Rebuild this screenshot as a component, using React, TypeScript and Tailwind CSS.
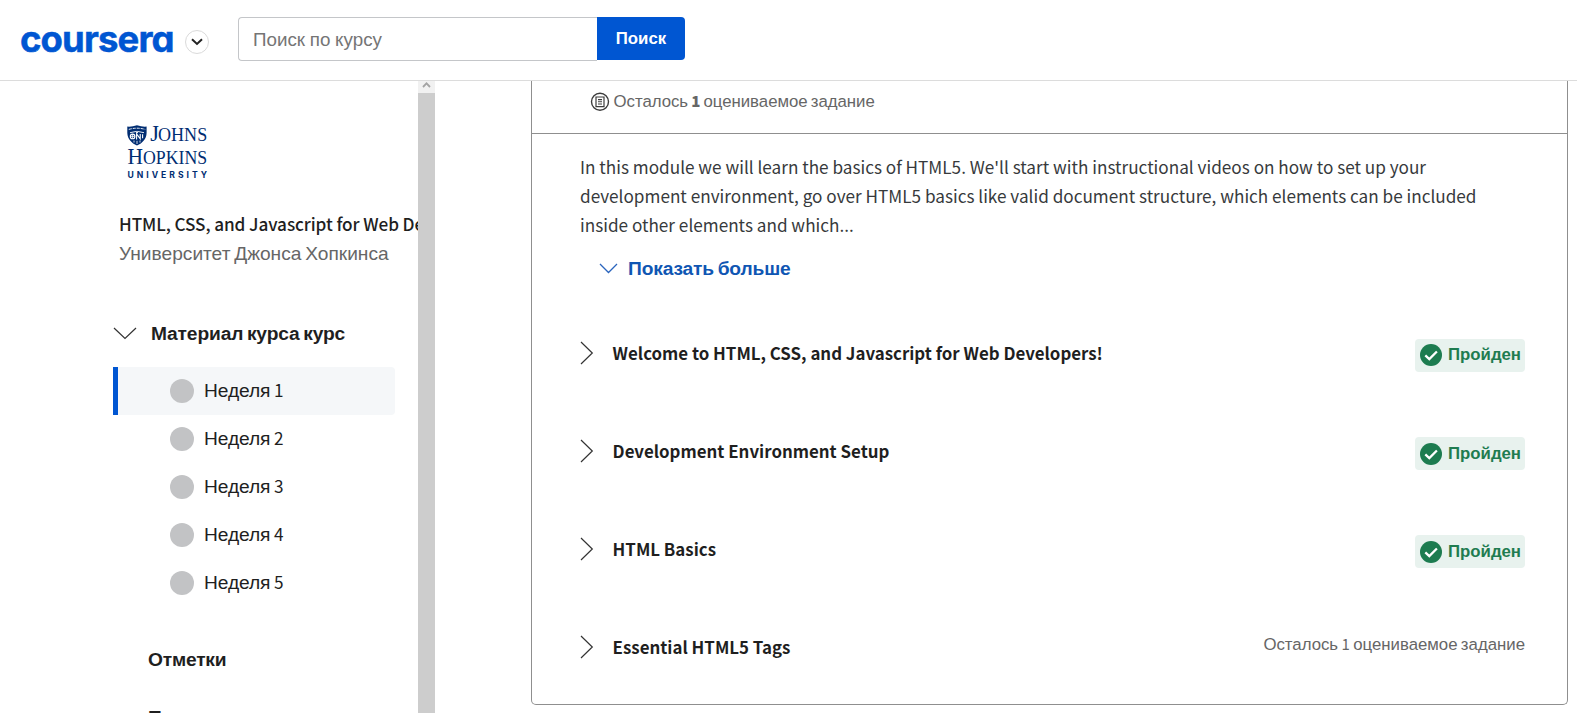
import type { ReactNode } from "react";

const weeks = [1, 2, 3, 4, 5];

const lessons = [
  { title: "Welcome to HTML, CSS, and Javascript for Web Developers!", done: true },
  { title: "Development Environment Setup", done: true },
  { title: "HTML Basics", done: true },
  { title: "Essential HTML5 Tags", done: false },
];

function Latin({ children, className = "" }: { children: ReactNode; className?: string }) {
  return (
    <span className={`font-['Noto_Sans_CJK_SC',sans-serif] text-[0.895em] leading-none ${className}`}>{children}</span>
  );
}

function CourseraLogo() {
  return (
    <svg className="h-[44px] w-[165px] overflow-visible" viewBox="0 0 165 44" role="img" aria-label="coursera">
      <text
        x="0"
        y="32"
        textLength="154.5"
        lengthAdjust="spacing"
        fill="#0056d2"
        stroke="#0056d2"
        strokeWidth="0.5"
        className="font-['Inter',sans-serif] text-[36.5px] font-bold [font-feature-settings:'cv11']"
      >
        coursera
      </text>
    </svg>
  );
}

function UniversityLogo() {
  return (
    <svg className="block h-[56px] w-[84px] overflow-visible" viewBox="0 0 84 56" fill="#002d72" role="img" aria-label="Johns Hopkins University">
      <path d="M0.3 1.6Q5 2 10 0.3Q15 2 19.6 1.6V8C19.4 14 15.5 18 10 20.6C4.5 18 0.6 14 0.3 8Z" />
      <path d="M1.8 4.4Q10 2 18.2 4.4" stroke="#fff" strokeWidth="0.9" fill="none" strokeDasharray="3 1" />
      <path d="M3 7.7L9.5 6.4V8.2M17 7.7L10.5 6.4V8.2" stroke="#fff" strokeWidth="0.9" fill="none" />
      <circle cx="5.6" cy="11.4" r="2.3" fill="none" stroke="#fff" strokeWidth="1.1" />
      <path d="M3.4 11.4H7.8M5.6 9.2V13.6" stroke="#fff" strokeWidth="0.8" />
      <path d="M9.6 14.4V9L13.2 13.8V9M15.6 9.2V13.2" stroke="#fff" strokeWidth="1.1" fill="none" />
      <path d="M7 15.5V17.5M10 15.8V19M13 15.5V17.5" stroke="#fff" strokeWidth="0.8" />
      <g className="font-['Liberation_Serif',serif]">
        <text x="23.2" y="16.3" fontSize="22.5">J</text>
        <text x="31" y="16.3" fontSize="18.5" textLength="49.2" lengthAdjust="spacingAndGlyphs">OHNS</text>
        <text x="0.6" y="39" fontSize="22.5" textLength="15.5" lengthAdjust="spacingAndGlyphs">H</text>
        <text x="16" y="39" fontSize="18.5" textLength="64.2" lengthAdjust="spacingAndGlyphs">OPKINS</text>
      </g>
      <text x="0.5" y="53" textLength="79.5" lengthAdjust="spacing" className="font-['Inter',sans-serif] text-[8.6px] font-bold">
        UNIVERSITY
      </text>
    </svg>
  );
}

function AssignmentIcon() {
  return (
    <svg className="-ml-[0.5px] h-5 w-5" viewBox="0 0 20 20" fill="none" stroke="#3c3c3c">
      <circle cx="10" cy="9.8" r="8.5" strokeWidth="1.4" />
      <path d="M6 5H14V14.6H6Z" strokeWidth="1.2" />
      <path d="M8 7.6H12M8 9.8H12M8 12H12" strokeWidth="1.1" />
    </svg>
  );
}

function DoneBadge() {
  return (
    <div className="mt-[5px] flex h-[33px] w-[110px] items-center rounded-[4px] bg-[#e8f2ee] pl-[5px] text-[#1f7c50] group-first:pb-[2px]">
      <svg className="mr-[6px] h-[22px] w-[22px]" viewBox="0 0 22 22">
        <circle cx="11" cy="11" r="11" fill="#1d7c50" />
        <path d="M5.3 11.3L9.3 15.1L16.9 7.5" fill="none" stroke="#fff" strokeWidth="2.3" />
      </svg>
      <span className="text-[16.8px] font-bold leading-5">Пройден</span>
    </div>
  );
}

function Header() {
  return (
    <header className="flex h-[81px] shrink-0 items-start border-b border-[#dcdcdc] pl-[20px]">
      <div className="mt-[20px] w-[165px]">
        <CourseraLogo />
      </div>
      <button className="mt-[30px] flex h-6 w-6 items-center justify-center rounded-full border border-[#dadada]">
        <svg className="h-[8px] w-[12px]" viewBox="0 0 12 8" fill="none" stroke="#222" strokeWidth="2">
          <path d="M1 1.3L6 6L11 1.3" />
        </svg>
      </button>
      <div className="ml-[29px] mt-[17px] flex">
        <div className="flex h-[44px] w-[359px] items-center rounded-l-[4px] border border-r-0 border-[#c4c6c9] pl-[14px] pt-[2px] text-[18.8px] text-[#757575] [word-spacing:-0.5px]">
          Поиск по курсу
        </div>
        <button className="h-[43px] w-[88px] rounded-r-[4px] bg-[#0056d2] text-[16.8px] font-bold text-white">Поиск</button>
      </div>
    </header>
  );
}

function Sidebar() {
  return (
    <aside className="w-[418px] shrink-0 overflow-hidden pt-[44px] text-[19.2px] text-[#1f1f1f]">
      <div className="ml-[127px] h-[84px]">
        <UniversityLogo />
      </div>
      <div className="ml-[119px] whitespace-nowrap leading-[29px]">
        <div className="h-[30px] font-['Noto_Sans_CJK_SC',sans-serif] text-[17.2px] font-medium tracking-[-0.1px]">
          HTML, CSS, and Javascript for Web Developers
        </div>
        <div className="h-[29px] text-[19.15px] text-[#666] [word-spacing:-1.5px]">Университет Джонса Хопкинса</div>
      </div>
      <div className="ml-[113px] mt-[50px] flex h-[30px] items-center">
        <svg className="h-[13px] w-[24px]" viewBox="0 0 24 13" fill="none" stroke="#333" strokeWidth="1.2">
          <path d="M1 1L12 11.5L23 1" />
        </svg>
        <span className="ml-[14px] mt-[2px] font-bold leading-[30px] tracking-[-0.14px] [word-spacing:-1.5px]">Материал курса курс</span>
      </div>
      <ul className="ml-[113px] mt-[19px] w-[282px]">
        {weeks.map((n) => (
          <li
            key={n}
            className={`flex h-12 items-center border-l-[5px] pl-[52px] ${
              n === 1 ? "rounded-r-[4px] border-[#0056d2] bg-[#f5f7f9]" : "border-transparent"
            }`}
          >
            <span className="mr-[10px] h-6 w-6 rounded-full bg-[#c2c3c5]" />
            <span className="leading-[30px] tracking-[-0.1px] [word-spacing:-1.5px]">
              Неделя <Latin>{n}</Latin>
            </span>
          </li>
        ))}
      </ul>
      <div className="ml-[148px] mt-[38px] h-[30px] font-bold leading-[30px] tracking-[-0.2px]">Отметки</div>
      <div className="ml-[148px] mt-[28px] h-[30px] font-bold leading-[30px] tracking-[-0.2px]">Примечания</div>
    </aside>
  );
}

function Scrollbar() {
  return (
    <div className="flex w-[17px] shrink-0 flex-col bg-[#f1f1f1]">
      <div className="flex h-[12px] justify-center pt-[1px]">
        <svg className="h-[6px] w-[9px]" viewBox="0 0 9 6" fill="none" stroke="#a3a3a3" strokeWidth="1.8">
          <path d="M1 5L4.5 1.4L8 5" />
        </svg>
      </div>
      <div className="flex-1 bg-[#cdcdcd]" />
    </div>
  );
}

function ModuleCard() {
  return (
    <section className="ml-[96px] h-[624px] w-[1037px] rounded-b-[5px] border border-t-0 border-[#8f8f8f] text-[#1f1f1f]">
      <div className="flex h-[53px] items-start border-b border-[#8f8f8f] pl-[58px] pt-[11px] text-[16.8px] leading-5 text-[#666]">
        <AssignmentIcon />
        <span className="ml-[4px] tracking-[-0.02px] [word-spacing:-1.5px]">
          Осталось <Latin className="font-black">1</Latin> оцениваемое задание
        </span>
      </div>
      <div className="pl-[48px] pr-[42px] pt-[18px]">
        <p className="whitespace-nowrap font-['Noto_Sans_CJK_SC',sans-serif] text-[17.17px] leading-[29px] text-[#373a3c]">
          In this module we will learn the basics of HTML5. We'll start with instructional videos on how to set up your
          <br />
          development environment, go over HTML5 basics like valid document structure, which elements can be included
          <br />
          inside other elements and which...
        </p>
        <button className="mt-[17px] flex h-6 items-center pl-[19px] text-[19.2px] font-bold leading-6 text-[#0f56b3]">
          <svg className="mr-[10px] h-[11px] w-[19px]" viewBox="0 0 19 11" fill="none" stroke="#2a64bd" strokeWidth="1.3">
            <path d="M1 1L9.5 9.5L18 1" />
          </svg>
          <span className="mt-[2px] tracking-[-0.15px] [word-spacing:-1.5px]">Показать больше</span>
        </button>
        <ul className="mt-[24px]">
          {lessons.map((l) => (
            <li key={l.title} className="group flex h-[98px] items-center">
              <svg className="h-[24px] w-[14px]" viewBox="0 0 14 24" fill="none" stroke="#333" strokeWidth="1.2">
                <path d="M1 1L12.3 12L1 23" />
              </svg>
              <span className="ml-[18.6px] flex-1 font-['Noto_Sans_CJK_SC',sans-serif] text-[16.88px] font-bold leading-6">
                {l.title}
              </span>
              {l.done ? (
                <DoneBadge />
              ) : (
                <span className="mb-[5px] text-[16.8px] leading-5 text-[#666] [word-spacing:-1.3px]">
                  Осталось <Latin>1</Latin> оцениваемое задание
                </span>
              )}
            </li>
          ))}
        </ul>
      </div>
    </section>
  );
}

export default function App() {
  return (
    <div className="flex h-screen flex-col overflow-hidden bg-white font-['Liberation_Sans',Arial,sans-serif]">
      <Header />
      <div className="flex min-h-0 flex-1">
        <Sidebar />
        <Scrollbar />
        <main className="min-w-0 flex-1">
          <ModuleCard />
        </main>
      </div>
    </div>
  );
}
